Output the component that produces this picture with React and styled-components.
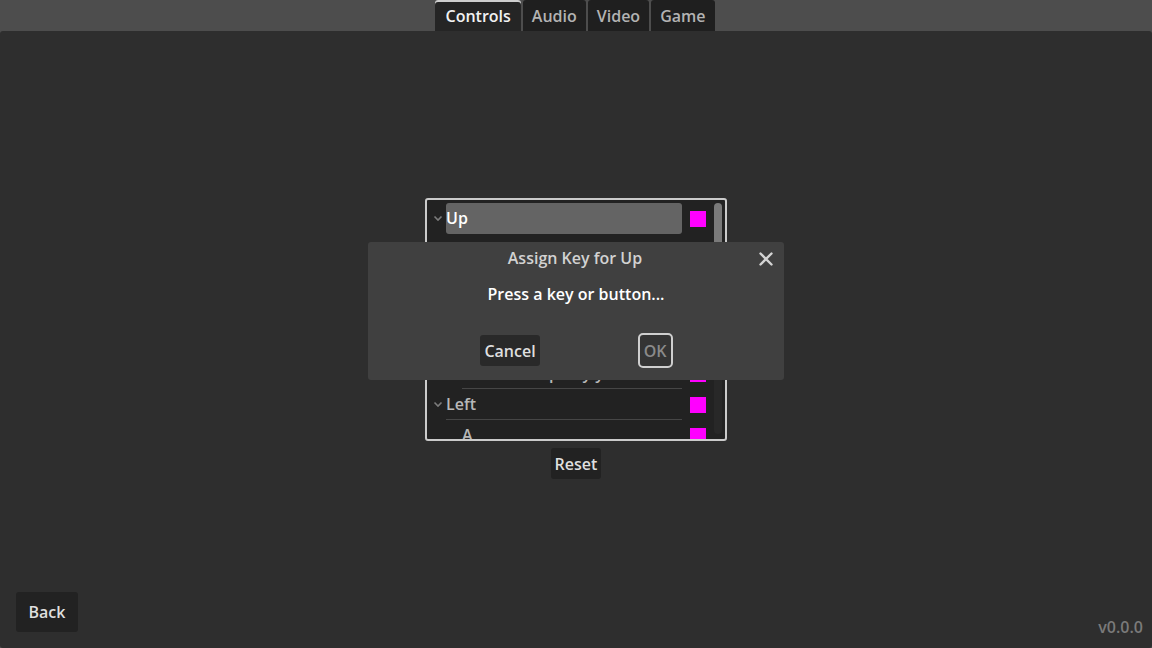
import React from 'react';
import styled, { createGlobalStyle } from 'styled-components';

const Global = createGlobalStyle`
  html, body { margin: 0; padding: 0; background: #4d4d4d; overflow: hidden; }
  #root { width: 1152px; height: 648px; }
  *, *::before, *::after { box-sizing: border-box; }
`;

const Screen = styled.div`
  position: relative;
  width: 1152px;
  height: 648px;
  display: flex;
  flex-direction: column;
  background: #4d4d4d;
  font-family: "Open Sans", "Noto Sans", sans-serif;
  font-weight: 600;
  font-size: 16px;
  color: #dfdfdf;
`;

const TabBar = styled.div`
  height: 31px;
  display: flex;
  justify-content: center;
  gap: 2px;
  padding-right: 2px;
`;

const Tab = styled.div`
  height: 31px;
  padding: 0 ${p => (p.$active ? 10 : 9)}px;
  display: flex;
  align-items: center;
  border-radius: 3px 3px 0 0;
  background: ${p => (p.$active ? '#252525' : '#1f1f1f')};
  color: ${p => (p.$active ? '#f2f2f2' : '#b3b3b3')};
  box-shadow: ${p => (p.$active ? 'inset 0 2px 0 #cfcfcf' : 'none')};
  line-height: 22px;
`;

const MainPanel = styled.div`
  flex: 1;
  background: #2e2e2e;
  border-radius: 3px;
  display: grid;
  grid-template: 1fr / 1fr;
  & > * { grid-area: 1 / 1; }
`;

const CenterColumn = styled.div`
  place-self: center;
  display: flex;
  flex-direction: column;
  align-items: center;
  gap: 7px;
  margin-bottom: 2px;
`;

const Tree = styled.div`
  width: 302px;
  height: 243px;
  border: 2px solid #cbcbcb;
  border-radius: 3px;
  background: #222222;
  display: flex;
  padding: 3px 3px 0 0;
  overflow: hidden;
`;

const Rows = styled.div`
  flex: 1;
  display: flex;
  flex-direction: column;
  overflow: hidden;
`;

const Row = styled.div`
  flex: none;
  height: 31px;
  display: flex;
  align-items: stretch;
`;

const ArrowCell = styled.div`
  flex: none;
  width: ${p => (p.$child ? 35 : 19)}px;
  display: flex;
  align-items: center;
  padding-left: 6px;
`;

const LabelCell = styled.div`
  flex: 1;
  display: flex;
  align-items: center;
  line-height: 22px;
  white-space: nowrap;
  overflow: hidden;
  border-radius: ${p => (p.$selected ? '3px' : '0')};
  background: ${p => (p.$selected ? '#646464' : 'transparent')};
  color: ${p => (p.$selected ? '#ffffff' : '#b8b8b8')};
  border-bottom: 1px solid ${p => (p.$selected ? 'transparent' : '#464646')};
`;

const ButtonCell = styled.div`
  flex: none;
  width: 32px;
  display: flex;
  align-items: center;
  padding-left: 8px;
`;

const ColorSwatch = styled.div`
  width: 16px;
  height: 16px;
  background: #ff00ff;
`;

const ScrollTrack = styled.div`
  flex: none;
  width: 8px;
  height: 231px;
  border-radius: 4px;
  background: #282828;
  display: flex;
  flex-direction: column;
`;

const ScrollGrab = styled.div`
  height: 112px;
  border-radius: 4px;
  background: #7a7a7a;
`;

const Button = styled.div`
  height: ${p => p.$h || 31}px;
  ${p => (p.$w ? `width: ${p.$w}px;` : '')}
  padding: 0 4px;
  display: flex;
  align-items: center;
  justify-content: center;
  border-radius: 3px;
  line-height: 22px;
  background: ${p => p.$bg || '#222222'};
  color: ${p => p.$color || '#dfdfdf'};
  ${p => (p.$focus ? 'outline: 2px solid #cfcfcf; outline-offset: 0;' : '')}
`;

const Footer = styled.div`
  align-self: end;
  display: flex;
  justify-content: space-between;
  align-items: flex-end;
  padding: 0 9px 0 16px;
`;

const BackSlot = styled.div`
  margin-bottom: 16px;
`;

const Version = styled.div`
  color: #7a7a7a;
  line-height: 22px;
  margin-bottom: 10px;
`;

const Dialog = styled.div`
  position: absolute;
  top: 242px;
  left: 368px;
  width: 416px;
  height: 138px;
  background: #404040;
  border-radius: 3px;
  display: flex;
  flex-direction: column;
`;

const TitleBar = styled.div`
  height: 32px;
  display: grid;
  grid-template-columns: 1fr auto 1fr;
  align-items: center;
`;

const Title = styled.div`
  grid-column: 2;
  color: #d2d2d2;
  line-height: 22px;
  margin-left: -2px;
`;

const CloseBox = styled.div`
  grid-column: 3;
  justify-self: end;
  margin-right: 11px;
  display: flex;
  margin-top: 1px;
`;

const DialogBody = styled.div`
  flex: 1;
  display: flex;
  flex-direction: column;
  padding: 9px 8px 14px;
`;

const Message = styled.div`
  text-align: center;
  color: #ffffff;
  line-height: 22px;
`;

const DialogButtons = styled.div`
  margin-top: 30px;
  display: flex;
  justify-content: center;
  gap: 100px;
  padding-right: 1px;
`;

const Chevron = () => (
  <svg width="10" height="7" viewBox="0 0 10 7">
    <polyline points="1.5,1.5 5,5 8.5,1.5" fill="none" stroke="#7c7c7c" strokeWidth="1.6" />
  </svg>
);

const CloseIcon = () => (
  <svg width="14" height="14" viewBox="0 0 14 14">
    <path d="M1.5 1.5 L12.5 12.5 M12.5 1.5 L1.5 12.5" stroke="#d4d4d4" strokeWidth="2.4" strokeLinecap="round" />
  </svg>
);

const rows = [
  { label: 'Up', parent: true, selected: true },
  { label: 'W' },
  { label: 'Up' },
  { label: 'Joypad Button 11' },
  { label: 'Joypad Axis 1 -' },
  { label: 'Direction Up Key y' },
  { label: 'Left', parent: true },
  { label: 'A' },
];

export default function App() {
  return (
    <>
      <Global />
      <Screen>
        <TabBar>
          <Tab $active>Controls</Tab>
          <Tab>Audio</Tab>
          <Tab>Video</Tab>
          <Tab>Game</Tab>
        </TabBar>
        <MainPanel>
          <CenterColumn>
            <Tree>
              <Rows>
                {rows.map((r, i) => (
                  <Row key={i}>
                    <ArrowCell $child={!r.parent}>{r.parent && <Chevron />}</ArrowCell>
                    <LabelCell $selected={r.selected}>{r.label}</LabelCell>
                    <ButtonCell>
                      <ColorSwatch />
                    </ButtonCell>
                  </Row>
                ))}
              </Rows>
              <ScrollTrack>
                <ScrollGrab />
              </ScrollTrack>
            </Tree>
            <Button>Reset</Button>
          </CenterColumn>
          <Footer>
            <BackSlot>
              <Button $w={62} $h={40}>Back</Button>
            </BackSlot>
            <Version>v0.0.0</Version>
          </Footer>
        </MainPanel>
        <Dialog>
          <TitleBar>
            <Title>Assign Key for Up</Title>
            <CloseBox>
              <CloseIcon />
            </CloseBox>
          </TitleBar>
          <DialogBody>
            <Message>Press a key or button...</Message>
            <DialogButtons>
              <Button $bg="#292929">Cancel</Button>
              <Button $bg="#343434" $color="#8a8a8a" $w={31} $focus>OK</Button>
            </DialogButtons>
          </DialogBody>
        </Dialog>
      </Screen>
    </>
  );
}
